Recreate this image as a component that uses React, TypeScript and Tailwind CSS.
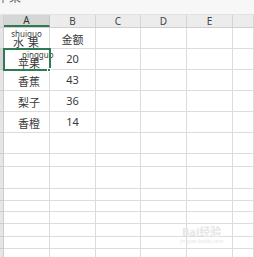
import React from "react";

const cols = [46, 46, 45, 46, 46, 21];
const rowHeights = [21, 21, 21, 21, 21, 21, 13, 22, 12, 11, 12, 13, 12, 10];

type Cell = { a?: React.ReactNode; b?: React.ReactNode };

const num = (t: string) => (
  <div className="flex h-full items-start justify-center pt-[4px] text-[11px] leading-[12px] text-[#3a3a3a]">{t}</div>
);
const fruit = (t: string) => (
  <div className="flex h-full items-end pb-[2px] pl-[14px] text-[11px] leading-[12px] text-[#3a3a3a]">{t}</div>
);

const data: Cell[] = [
  {
    a: (
      <div className="flex h-[20px] flex-col items-center pt-[3px] text-[#3a3a3a]">
        <span className="block h-[6px] text-[8px] leading-[6px]">shuiguo</span>
        <span className="block h-[11px] pl-[3px] text-[11px] leading-[11px] tracking-[4px]">水果</span>
      </div>
    ),
    b: <div className="flex h-full items-end justify-center pb-[2px] text-[11px] leading-[12px] text-[#3a3a3a]">金额</div>,
  },
  {
    a: (
      <div className="flex h-[20px] flex-col items-start pt-[3px] pl-[14px] text-[#3a3a3a]">
        <span className="block h-[6px] pl-[4px] text-[8px] leading-[6px]">pingguo</span>
        <span className="block h-[11px] text-[11px] leading-[11px]">苹果</span>
      </div>
    ),
    b: num("20"),
  },
  { a: fruit("香蕉"), b: num("43") },
  { a: fruit("梨子"), b: num("36") },
  { a: fruit("香橙"), b: num("14") },
];

export default function App() {
  return (
    <div
      className="relative h-[257px] w-[254px] overflow-hidden bg-white"
      style={{ fontFamily: '"Noto Sans", "Noto Sans CJK SC", sans-serif' }}
    >
      <div className="h-[15px] overflow-hidden border-b border-[#e2e2e2] bg-[#f7f7f7]">
        <div className="-ml-[3px] -mt-[9px] text-[12px] leading-[14px] text-[#666]">苹果</div>
      </div>
      <div className="flex h-[13px] border-b border-[#cfcfcf] bg-[#ececec]">
        <div className="w-[4px] border-r border-[#cfcfcf] bg-[#e0e0e0]" />
        {["A", "B", "C", "D", "E", ""].map((c, i) => (
          <div
            key={i}
            style={{ width: cols[i] }}
            className={
              i === 0
                ? "flex items-center justify-center border-r border-b-2 border-r-[#c8c8c8] border-b-[#2f7a53] bg-[#d6d6d6] text-[10px] leading-none text-[#333]"
                : "flex items-center justify-center border-r border-[#d4d4d4] text-[10px] leading-none text-[#444]"
            }
          >
            {c}
          </div>
        ))}
      </div>
      {rowHeights.map((h, r) => (
        <div key={r} className="flex" style={{ height: h }}>
          <div
            className={
              r === 1
                ? "w-[4px] border-r border-b border-[#c8c8c8] bg-[#d4d4d4]"
                : "w-[4px] border-r border-b border-[#cdcdcd] bg-[#e6e6e6]"
            }
          />
          {cols.map((w, c) => (
            <div key={c} style={{ width: w }} className="border-r border-b border-[#dcdcdc]">
              {c === 0 ? data[r]?.a : c === 1 ? data[r]?.b : null}
            </div>
          ))}
        </div>
      ))}
      <div className="pointer-events-none absolute left-[3px] top-[48px] h-[23px] w-[48px] border-2 border-[#2f7a53]" />
      <div className="pointer-events-none absolute left-[47px] top-[68px] h-[4px] w-[4px] border border-white bg-[#2f7a53]" />
      <div className="pointer-events-none absolute left-[180px] top-[226px] flex flex-col items-center text-[#e6e6e6]">
        <span className="text-[11px] font-bold leading-[12px]">Bai经验</span>
        <span className="text-[5px] leading-[6px]">jingyan.baidu.com</span>
      </div>
    </div>
  );
}
